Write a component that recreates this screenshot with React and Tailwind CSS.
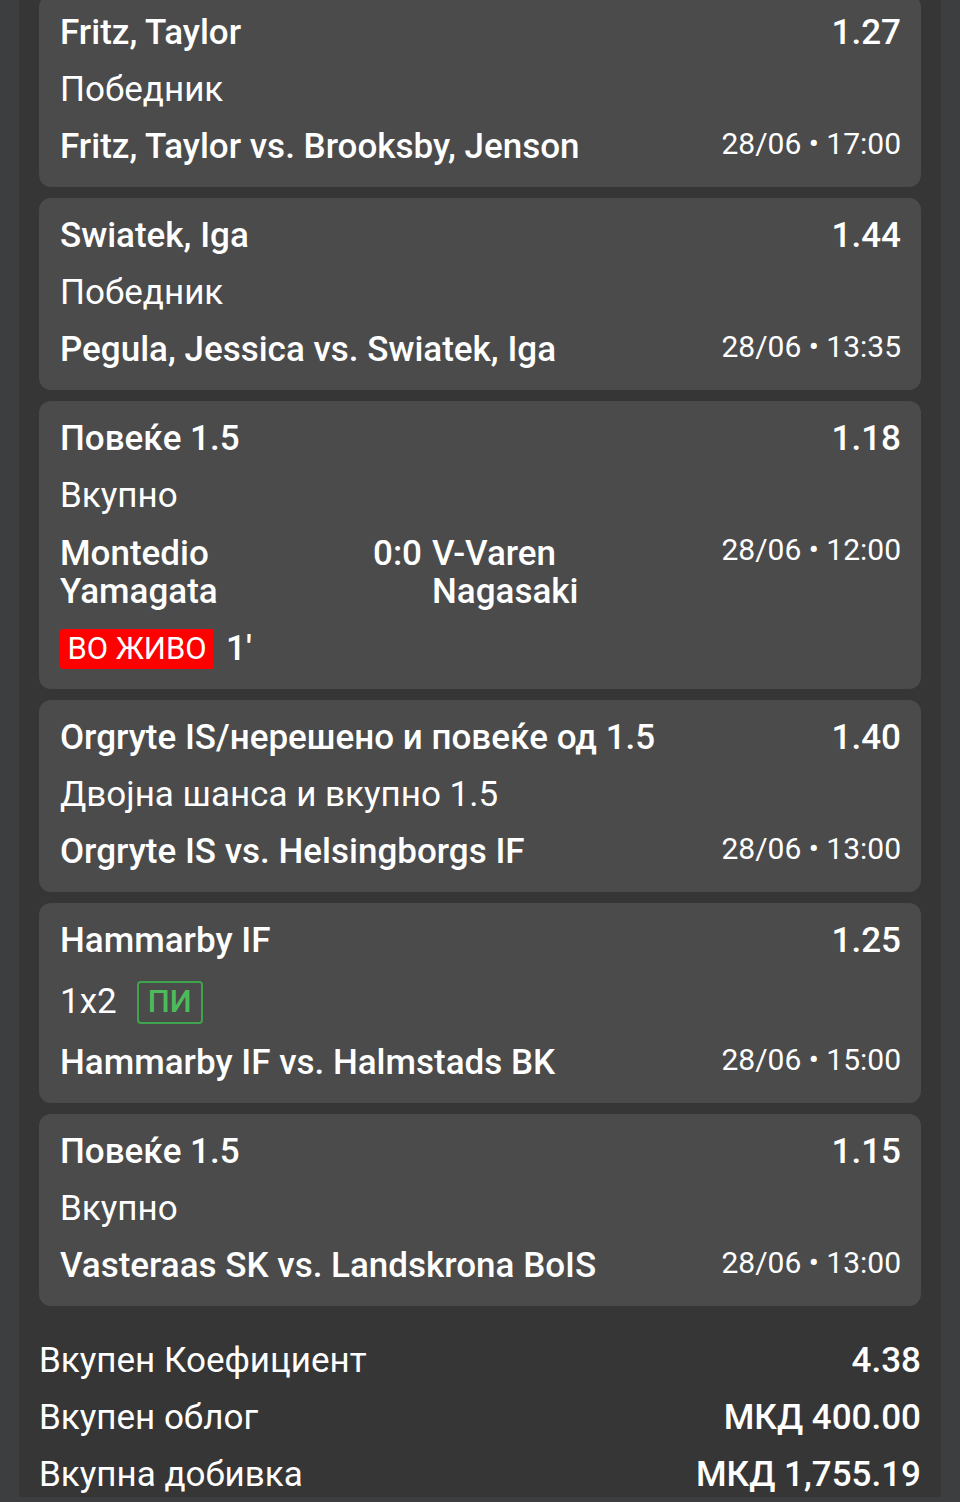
import React from "react";

const font = { fontFamily: "Roboto, 'Noto Sans', sans-serif" };

function Card({ title, odds, market, badge, match, date, live }) {
  return (
    <div className="rounded-[12px] bg-[#4b4b4b] pl-[21px] pr-[20px] pt-[18px] pb-[20px] text-white">
      <div className="flex justify-between items-center text-[35px] leading-[40px] font-medium h-[40px]">
        <span>{title}</span>
        <span>{odds}</span>
      </div>
      {badge ? (
        <div className="mt-[20px] flex items-center gap-[20px] text-[35px] h-[43px]">
          <span>{market}</span>
          <span className="h-[43px] w-[66px] flex items-center justify-center rounded-[4px] border-2 border-[#3fa34d] text-[#4cbb5a] text-[31px] font-medium">
            ПИ
          </span>
        </div>
      ) : (
        <div className="mt-[17px] text-[35px] leading-[40px] h-[40px]">{market}</div>
      )}
      <div className={(badge ? "mt-[19px]" : live ? "mt-[19px]" : "mt-[17px]") + " flex items-start justify-between"}>
        {match}
        <span className={(live ? "-mt-[2px] " : "") + "text-[30px] leading-[34px] whitespace-nowrap"}>{date}</span>
      </div>
      {live && (
        <div className="mt-[18px] flex items-center gap-[12px] h-[40px]">
          <span className="h-[40px] w-[154px] flex items-center justify-center rounded-[3px] bg-[#ff0000] text-[31px] text-white">
            ВО ЖИВО
          </span>
          <span className="text-[35px] font-medium leading-[40px]">1'</span>
        </div>
      )}
    </div>
  );
}

const simpleMatch = (t) => (
  <span className="text-[35px] leading-[40px] h-[40px] font-medium whitespace-nowrap">{t}</span>
);

export default function App() {
  return (
    <div style={font} className="h-[1502px] bg-[#3d3e40] px-[19px] overflow-hidden">
      <div className="bg-[#363636] h-[1502px] px-[20px]">
        <div className="-mt-[5px] flex flex-col gap-[11px]">
          <Card
            title="Fritz, Taylor"
            odds="1.27"
            market="Победник"
            match={simpleMatch("Fritz, Taylor vs. Brooksby, Jenson")}
            date="28/06 • 17:00"
          />
          <Card
            title="Swiatek, Iga"
            odds="1.44"
            market="Победник"
            match={simpleMatch("Pegula, Jessica vs. Swiatek, Iga")}
            date="28/06 • 13:35"
          />
          <Card
            title="Повеќе 1.5"
            odds="1.18"
            market="Вкупно"
            live
            match={
              <div className="flex items-start text-[35px] leading-[38px] font-medium">
                <span className="w-[313px]">Montedio<br />Yamagata</span>
                <span className="w-[59px]">0:0</span>
                <span className="w-[200px]">V-Varen<br />Nagasaki</span>
              </div>
            }
            date="28/06 • 12:00"
          />
          <Card
            title="Orgryte IS/нерешено и повеќе од 1.5"
            odds="1.40"
            market="Двојна шанса и вкупно 1.5"
            match={simpleMatch("Orgryte IS vs. Helsingborgs IF")}
            date="28/06 • 13:00"
          />
          <Card
            title="Hammarby IF"
            odds="1.25"
            market="1x2"
            badge
            match={simpleMatch("Hammarby IF vs. Halmstads BK")}
            date="28/06 • 15:00"
          />
          <Card
            title="Повеќе 1.5"
            odds="1.15"
            market="Вкупно"
            match={simpleMatch("Vasteraas SK vs. Landskrona BoIS")}
            date="28/06 • 13:00"
          />
        </div>
        <div className="pt-[35px] flex flex-col gap-[17px] text-white text-[35px] leading-[40px]">
          <div className="flex justify-between h-[40px]">
            <span>Вкупен Коефициент</span>
            <span className="font-medium">4.38</span>
          </div>
          <div className="flex justify-between h-[40px]">
            <span>Вкупен облог</span>
            <span className="font-medium">МКД 400.00</span>
          </div>
          <div className="flex justify-between h-[40px]">
            <span>Вкупна добивка</span>
            <span className="font-medium">МКД 1,755.19</span>
          </div>
        </div>
      </div>
    </div>
  );
}
